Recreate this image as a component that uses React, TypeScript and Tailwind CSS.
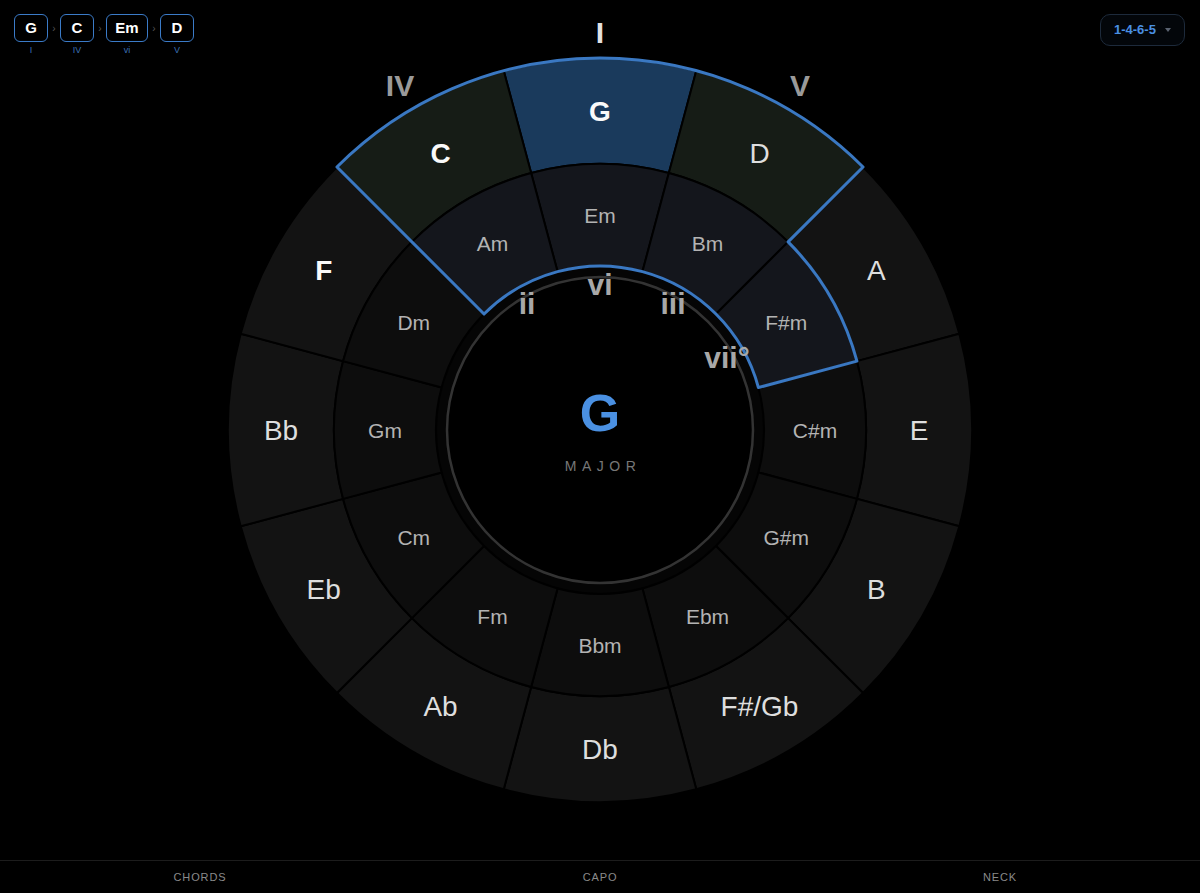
import React from "react";

const CX = 600;
const CY = 430;
const R_OUT = 372;
const R_MID = 266;
const R_IN = 164;

const majors = ["G", "D", "A", "E", "B", "F#/Gb", "Db", "Ab", "Eb", "Bb", "F", "C"];
const minors = ["Em", "Bm", "F#m", "C#m", "G#m", "Ebm", "Bbm", "Fm", "Cm", "Gm", "Dm", "Am"];

const pt = (r: number, deg: number) => {
    const a = (deg * Math.PI) / 180;
    return [CX + r * Math.sin(a), CY - r * Math.cos(a)];
};

const sector = (r0: number, r1: number, a0: number, a1: number) => {
    const [x0, y0] = pt(r1, a0);
    const [x1, y1] = pt(r1, a1);
    const [x2, y2] = pt(r0, a1);
    const [x3, y3] = pt(r0, a0);
    return `M${x0} ${y0} A${r1} ${r1} 0 0 1 ${x1} ${y1} L${x2} ${y2} A${r0} ${r0} 0 0 0 ${x3} ${y3} Z`;
};

const majorFill = (i: number) => {
    if (i === 0) return "#1a3a5c";
    if (i === 1 || i === 11) return "#161c16";
    return "#131313";
};

const minorFill = (i: number) => {
    if (i === 0 || i === 1 || i === 2 || i === 11) return "#14161c";
    return "#0d0d0d";
};

const boldMajors = ["G", "C", "F"];

// outline around I, IV, V, ii, iii, vi, vii°
const outline = (() => {
    const a = pt(R_OUT, -45);
    const b = pt(R_OUT, 45);
    const c = pt(R_MID, 45);
    const d = pt(R_MID, 75);
    const e = pt(R_IN, 75);
    const f = pt(R_IN, -45);
    return `M${a[0]} ${a[1]} A${R_OUT} ${R_OUT} 0 0 1 ${b[0]} ${b[1]} L${c[0]} ${c[1]} A${R_MID} ${R_MID} 0 0 1 ${d[0]} ${d[1]} L${e[0]} ${e[1]} A${R_IN} ${R_IN} 0 0 0 ${f[0]} ${f[1]} Z`;
})();

const numerals = [
    { t: "I", x: 600, y: 32, c: "#e2e2e2" },
    { t: "IV", x: 400, y: 85, c: "#9a9a9a" },
    { t: "V", x: 800, y: 85, c: "#9a9a9a" },
    { t: "ii", x: 527, y: 303, c: "#a8a8a8" },
    { t: "vi", x: 600, y: 284, c: "#a8a8a8" },
    { t: "iii", x: 673, y: 303, c: "#a8a8a8" },
    { t: "vii°", x: 727, y: 357, c: "#a8a8a8" },
];

const progression = [
    { chord: "G", degree: "I", w: "w-[34px]" },
    { chord: "C", degree: "IV", w: "w-[34px]" },
    { chord: "Em", degree: "vi", w: "w-[42px]" },
    { chord: "D", degree: "V", w: "w-[34px]" },
];

function Wheel() {
    return (
        <svg width="1200" height="860" viewBox="0 0 1200 860" className="block">
            {majors.map((m, i) => (
                <path key={m} d={sector(R_MID, R_OUT, i * 30 - 15, i * 30 + 15)} fill={majorFill(i)} stroke="#000" strokeWidth={2} />
            ))}
            {minors.map((m, i) => (
                <path key={m} d={sector(R_IN, R_MID, i * 30 - 15, i * 30 + 15)} fill={minorFill(i)} stroke="#000" strokeWidth={2} />
            ))}
            <circle cx={CX} cy={CY} r={R_IN - 1} fill="#050505" />
            <circle cx={CX} cy={CY} r={153} fill="#000" stroke="#333" strokeWidth={2.5} />
            <path d={outline} fill="none" stroke="#3a78c2" strokeWidth={3} strokeLinejoin="round" />

            {majors.map((m, i) => {
                const [x, y] = pt(319, i * 30);
                const bold = boldMajors.includes(m);
                return (
                    <text key={m} x={x} y={y} textAnchor="middle" dominantBaseline="central" fontSize={28}
                        fontWeight={bold ? 700 : 400} fill={bold ? "#fafafa" : "#dedede"}>
                        {m}
                    </text>
                );
            })}
            {minors.map((m, i) => {
                const [x, y] = pt(215, i * 30);
                return (
                    <text key={m} x={x} y={y} textAnchor="middle" dominantBaseline="central" fontSize={21} fill="#b3b3b3">
                        {m}
                    </text>
                );
            })}
            {numerals.map((n) => (
                <text key={n.t} x={n.x} y={n.y} textAnchor="middle" dominantBaseline="central" fontSize={30} fontWeight={700} fill={n.c}>
                    {n.t}
                </text>
            ))}

            <text x={CX} y={413} textAnchor="middle" dominantBaseline="central" fontSize={52} fontWeight={700} fill="#4a90e2">G</text>
            <text x={CX + 3} y={466} textAnchor="middle" dominantBaseline="central" fontSize={14} letterSpacing={5.5} fill="#777">MAJOR</text>
        </svg>
    );
}

export default function App() {
    return (
        <div className="w-[1200px] h-[893px] bg-black flex flex-col overflow-hidden font-['Liberation_Sans',Arial,sans-serif]">
            <div className="relative h-[860px]">
                <Wheel />

                {/* progression */}
                <div className="absolute left-[14px] top-[14px] flex items-start gap-[3px]">
                    {progression.map((p, i) => (
                        <React.Fragment key={p.chord}>
                            {i > 0 && (
                                <span className="w-[6px] h-[28px] flex items-center justify-center text-[10px] text-[#555]">›</span>
                            )}
                            <div className="flex flex-col items-center">
                                <div className={`${p.w} h-[28px] rounded-[6px] border-[1.5px] border-[#3b7bc8] flex items-center justify-center text-white font-bold text-[15px]`}>
                                    {p.chord}
                                </div>
                                <span className="mt-[3px] text-[9px] leading-[10px] text-[#3a70b5]">{p.degree}</span>
                            </div>
                        </React.Fragment>
                    ))}
                </div>

                {/* pattern selector */}
                <button className="absolute right-[15px] top-[14px] w-[85px] h-[32px] rounded-[10px] border border-[#1d2a3b] bg-[#03060a] flex items-center pl-[13px] gap-[9px]">
                    <span className="text-[13px] font-bold text-[#4a90e2]">1-4-6-5</span>
                    <svg width="6" height="4" viewBox="0 0 6 4"><path d="M0 0H6L3 4Z" fill="#5a6270" /></svg>
                </button>
            </div>

            <div className="flex-1 border-t border-[#1c1c1c] grid grid-cols-3 items-center">
                <span className="text-center text-[11px] tracking-[0.08em] text-[#8a8a8a]">CHORDS</span>
                <span className="text-center text-[11px] tracking-[0.08em] text-[#8a8a8a]">CAPO</span>
                <span className="text-center text-[11px] tracking-[0.08em] text-[#8a8a8a]">NECK</span>
            </div>
        </div>
    );
}
